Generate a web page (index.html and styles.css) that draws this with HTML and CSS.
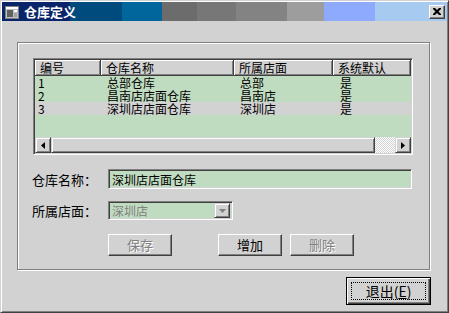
FILE: index.html
```html
<!DOCTYPE html>
<html>
<head>
<meta charset="utf-8">
<link rel="stylesheet" href="styles.css">
</head>
<body>
<div class="window">
  <div class="titlebar">
    <svg class="appicon" width="14" height="13" viewBox="0 0 14 13">
      <rect x="0.5" y="0.5" width="13" height="12" fill="#c0c0c0" stroke="#808080"/>
      <rect x="1" y="1" width="12" height="2" fill="#fff"/>
      <rect x="2" y="4" width="6" height="7" fill="#606060"/>
      <rect x="9" y="4" width="3" height="2" fill="#fff"/>
      <rect x="9" y="7" width="3" height="4" fill="#a0a0a0"/>
    </svg>
    <span class="title">仓库定义</span>
    <span class="spacer"></span>
    <span class="closebtn">
      <svg width="8" height="7" viewBox="0 0 8 7"><path d="M0 0h2l2 2 2-2h2v1L5.5 3.5 8 6v1H6L4 5 2 7H0V6l2.5-2.5L0 1z" fill="#000"/></svg>
    </span>
  </div>
  <div class="content">
    <div class="group">
      <div class="list">
        <div class="listhead">
          <div class="hc c1">编号</div>
          <div class="hc c2">仓库名称</div>
          <div class="hc c3">所属店面</div>
          <div class="hc c4">系统默认</div>
        </div>
        <div class="rows">
          <div class="row"><div class="rc c1 first">1</div><div class="rc c2">总部仓库</div><div class="rc c3">总部</div><div class="rc c4">是</div></div>
          <div class="row"><div class="rc c1 first">2</div><div class="rc c2">昌南店店面仓库</div><div class="rc c3">昌南店</div><div class="rc c4">是</div></div>
          <div class="row selected"><div class="rc c1 first">3</div><div class="rc c2">深圳店店面仓库</div><div class="rc c3">深圳店</div><div class="rc c4">是</div></div>
        </div>
        <div class="hscroll">
          <div class="sbtn"><svg width="4" height="7" viewBox="0 0 4 7"><path d="M4 0v7L0 3.5z" fill="#000"/></svg></div>
          <div class="thumb"></div>
          <div class="track"></div>
          <div class="sbtn"><svg width="4" height="7" viewBox="0 0 4 7"><path d="M0 0v7l4-3.5z" fill="#000"/></svg></div>
        </div>
      </div>
      <div class="formrow first-row">
        <span class="label">仓库名称：</span>
        <div class="edit"><span>深圳店店面仓库</span></div>
      </div>
      <div class="formrow second-row">
        <span class="label">所属店面：</span>
        <div class="combo"><span class="combotext">深圳店</span><span class="dropbtn"><svg width="7" height="4" viewBox="0 0 7 4"><path d="M0 0h7L3.5 4z" fill="#808080"/></svg></span></div>
      </div>
      <div class="btnrow">
        <button class="btn disabled b-save">保存</button>
        <button class="btn b-add">增加</button>
        <button class="btn disabled b-del">删除</button>
      </div>
    </div>
    <div class="footer">
      <button class="exitbtn"><span class="focus">退出(<u>E</u>)</span></button>
    </div>
  </div>
</div>
</body>
</html>
```

FILE: styles.css
```css
* { box-sizing: border-box; }
body {
  margin: 0;
  background: #d2d2d2;
  font-family: "Noto Sans CJK SC", "Noto Sans", sans-serif;
  font-size: 12px;
  color: #000;
}
.window {
  width: 449px;
  height: 313px;
  background: #d2d2d2;
  border: 1px solid;
  border-color: #d2d2d2 #404040 #404040 #d2d2d2;
  box-shadow: inset 1px 1px #fff, inset -1px -1px #808080;
  padding: 1px;
  display: flex;
  flex-direction: column;
}
.titlebar {
  height: 19px;
  display: flex;
  align-items: center;
  padding: 0 2px 0 3px;
  background: linear-gradient(to right,
    #0a246a 0 68px, #004b7e 68px 120px, #00669c 120px 160px,
    #6c6c6c 160px 195px, #777777 195px 234px, #838383 234px 285px,
    #9d9d9d 285px 322px, #8eaaff 322px 373px, #a6caf0 373px);
}
.appicon { display: block; margin-top: 1px; }
.title {
  color: #fff;
  font-weight: bold;
  font-size: 13px;
  line-height: 19px;
  margin-left: 5px;
}
.spacer { flex: 1; }
.closebtn {
  width: 16px;
  height: 14px;
  background: #d2d2d2;
  border: 1px solid;
  border-color: #fff #404040 #404040 #fff;
  box-shadow: inset -1px -1px #808080;
  display: flex;
  align-items: center;
  justify-content: center;
  padding-right: 1px;
}
.closebtn svg { display: block; }
.content {
  flex: 1;
  padding: 21px 0 0 15px;
  display: flex;
  flex-direction: column;
}
.group {
  width: 413px;
  height: 228px;
  border: 1px solid #808080;
  box-shadow: inset 1px 1px #fff, 1px 1px #fff;
  padding: 15px 0 0 15px;
  display: flex;
  flex-direction: column;
}
.list {
  width: 380px;
  height: 97px;
  border: 1px solid;
  border-color: #808080 #fff #fff #808080;
  background: #c0dcc0;
  box-shadow: inset 1px 1px #404040, inset -1px -1px #d2d2d2;
  padding: 1px;
  display: flex;
  flex-direction: column;
  overflow: hidden;
}
.listhead {
  display: flex;
  height: 16px;
  flex: none;
}
.hc {
  background: #d2d2d2;
  border-right: 1px solid #404040;
  border-bottom: 1px solid #404040;
  box-shadow: inset 1px 1px #fff, inset -1px -1px #808080;
  line-height: 15px;
  padding-left: 5px;
  white-space: nowrap;
  overflow: hidden;
}
.c1 { width: 66px; flex: none; }
.c2 { width: 133px; flex: none; }
.c3 { width: 99px; flex: none; }
.c4 { flex: 1; }
.rows { flex: 1; }
.row {
  display: flex;
  height: 13px;
  line-height: 13px;
}
.row.selected { background: #d2d2d2; }
.rc { padding-left: 6px; white-space: nowrap; }
.rc.c4 { padding-left: 7px; }
.rc.first { padding-left: 3px; }
.hscroll {
  height: 16px;
  display: flex;
  flex: none;
}
.sbtn, .thumb {
  background: #d2d2d2;
  border: 1px solid;
  border-color: #d2d2d2 #404040 #404040 #d2d2d2;
  box-shadow: inset 1px 1px #fff, inset -1px -1px #808080;
}
.sbtn {
  width: 16px;
  display: flex;
  align-items: center;
  justify-content: center;
}
.sbtn svg { display: block; }
.thumb { flex: 1; }
.track {
  width: 20px;
  background-color: #d2d2d2;
  background-image: repeating-conic-gradient(#ffffff 0 25%, #d2d2d2 0 50%);
  background-size: 2px 2px;
}
.formrow {
  display: flex;
  align-items: center;
  margin-left: -1px;
}
.first-row { margin-top: 14px; height: 20px; }
.second-row { margin-top: 12px; height: 19px; }
.label { width: 76px; flex: none; font-size: 13px; }
.edit, .combo {
  height: 100%;
  background: #c0dcc0;
  border: 1px solid;
  border-color: #808080 #fff #fff #808080;
  box-shadow: inset 1px 1px #404040, inset -1px -1px #d2d2d2;
  display: flex;
  align-items: center;
}
.edit { width: 304px; padding-left: 3px; }
.combo { width: 125px; padding: 2px 2px 2px 3px; }
.combotext { flex: 1; color: #808080; }
.dropbtn {
  width: 16px;
  height: 15px;
  background: #d2d2d2;
  border: 1px solid;
  border-color: #d2d2d2 #404040 #404040 #d2d2d2;
  box-shadow: inset 1px 1px #fff, inset -1px -1px #808080;
  display: flex;
  align-items: center;
  justify-content: center;
}
.dropbtn svg { display: block; }
.btnrow {
  display: flex;
  margin-top: 14px;
  padding-left: 75px;
}
.btn {
  width: 64px;
  height: 22px;
  font: inherit;
  font-size: 13px;
  font-weight: normal;
  color: #000;
  background: #d2d2d2;
  border: 1px solid;
  border-color: #fff #404040 #404040 #fff;
  box-shadow: inset -1px -1px #808080;
  padding: 0;
  line-height: 18px;
}
.btn.disabled { color: #808080; text-shadow: 1px 1px #fff; }
.b-add { margin-left: 46px; }
.b-del { margin-left: 8px; }
.footer {
  display: flex;
  justify-content: flex-end;
  width: 414px;
  margin-top: 7px;
}
.exitbtn {
  width: 85px;
  height: 28px;
  font: inherit;
  color: #000;
  background: #d2d2d2;
  border: 1px solid #000;
  box-shadow: inset 1px 1px #fff, inset -1px -1px #404040, inset -2px -2px #808080;
  padding: 4px;
  display: flex;
}
.focus {
  flex: 1;
  border: 1px dotted #000;
  display: flex;
  align-items: center;
  justify-content: center;
  font-size: 14px;
}
.focus u { text-decoration: underline; }
```
